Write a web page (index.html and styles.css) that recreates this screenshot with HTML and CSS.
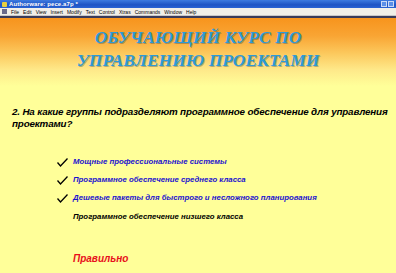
FILE: index.html
```html
<!DOCTYPE html>
<html>
<head>
<meta charset="utf-8">
<link rel="stylesheet" href="styles.css">
</head>
<body>
<div class="window">
  <div class="titlebar">
    <span class="app-icon"></span>
    <span class="title-text">Authorware: pece.a7p *</span>
    <span class="spacer"></span>
    <span class="win-btns"><span class="wb"></span><span class="wb"></span></span>
  </div>
  <div class="menubar">
    <span class="mi-icon"></span>
    <span class="mi">File</span><span class="mi">Edit</span><span class="mi">View</span><span class="mi">Insert</span><span class="mi">Modify</span><span class="mi">Text</span><span class="mi">Control</span><span class="mi">Xtras</span><span class="mi">Commands</span><span class="mi">Window</span><span class="mi">Help</span>
  </div>
  <div class="stage">
    <h1 class="course-title">ОБУЧАЮЩИЙ КУРС ПО<br>УПРАВЛЕНИЮ ПРОЕКТАМИ</h1>
    <p class="question">2. На какие группы подразделяют программное обеспечение для управления<br>проектами?</p>
    <ul class="answers">
      <li class="answer checked"><span class="check"><svg width="11" height="9" viewBox="0 0 11 9"><path d="M0.5 4.5 L3.5 8 L10.5 0.5" fill="none" stroke="#000" stroke-width="1.3"/></svg></span><span>Мощные профессиональные системы</span></li>
      <li class="answer checked"><span class="check"><svg width="11" height="9" viewBox="0 0 11 9"><path d="M0.5 4.5 L3.5 8 L10.5 0.5" fill="none" stroke="#000" stroke-width="1.3"/></svg></span><span>Программное обеспечение среднего класса</span></li>
      <li class="answer checked"><span class="check"><svg width="11" height="9" viewBox="0 0 11 9"><path d="M0.5 4.5 L3.5 8 L10.5 0.5" fill="none" stroke="#000" stroke-width="1.3"/></svg></span><span>Дешевые пакеты для быстрого и несложного планирования</span></li>
      <li class="answer plain"><span class="check"></span><span>Программное обеспечение низшего класса</span></li>
    </ul>
    <p class="result">Правильно</p>
  </div>
</div>
</body>
</html>
```
FILE: styles.css
```css
* { box-sizing: border-box; }
html, body { margin: 0; padding: 0; }
body { width: 396px; height: 273px; overflow: hidden; background: #ffff99; font-family: "Liberation Sans", Arial, sans-serif; }
.window { display: flex; flex-direction: column; height: 273px; }
.titlebar {
  height: 8px; display: flex; align-items: center; gap: 2px; padding: 0 2px;
  background: linear-gradient(#3d7be0, #1e54c4 60%, #2a63d4);
}
.app-icon { width: 5px; height: 5px; background: #e8d040; border-radius: 1px; }
.title-text { color: #fff; font-size: 6px; font-weight: bold; line-height: 8px; letter-spacing: 0.1px; }
.spacer { flex: 1; }
.win-btns { display: flex; gap: 1px; }
.wb { width: 6px; height: 6px; background: #5b8fe8; border: 1px solid #c9d8f5; }
.menubar {
  height: 8px; display: flex; align-items: center; gap: 4px; padding: 0 2px;
  background: #f1efe8; border-bottom: 1px solid #c8c8c8;
}
.mi-icon { width: 5px; height: 5px; background: #6a6a8a; }
.mi { font-size: 5px; line-height: 8px; color: #000; }
.stage {
  flex: 1; border-top: 2px solid #3a3a58;
  background: linear-gradient(#f7941d 0px, #f9a534 18px, #fcc85c 35px, #fee98a 52px, #ffff99 68px, #ffff99 100%);
  display: flex; flex-direction: column;
}
.course-title {
  margin: 8px 0 0; text-align: center;
  font-family: "Liberation Serif", "Times New Roman", serif; font-style: italic; font-weight: bold;
  font-size: 17.5px; line-height: 23px; color: #2e9ad6;
  text-shadow: 1px 1px 0 rgba(40,60,90,0.35);
}
.question {
  margin: 34px 0 0 12px; font-size: 9.8px; line-height: 12px; font-weight: bold; font-style: italic; color: #000;
  letter-spacing: -0.15px; white-space: nowrap;
}
.answers { list-style: none; margin: 27px 0 0 57px; padding: 0; display: flex; flex-direction: column; gap: 7.7px; }
.answer { display: flex; align-items: center; gap: 5px; font-size: 7.8px; line-height: 10.5px; font-weight: bold; font-style: italic; }
.check { width: 11px; height: 9px; display: flex; }
.checked { color: #1a10d0; }
.plain { color: #000; }
.result { margin: 31px 0 0 73px; color: #e8101c; font-size: 10px; font-weight: bold; font-style: italic; }
```
